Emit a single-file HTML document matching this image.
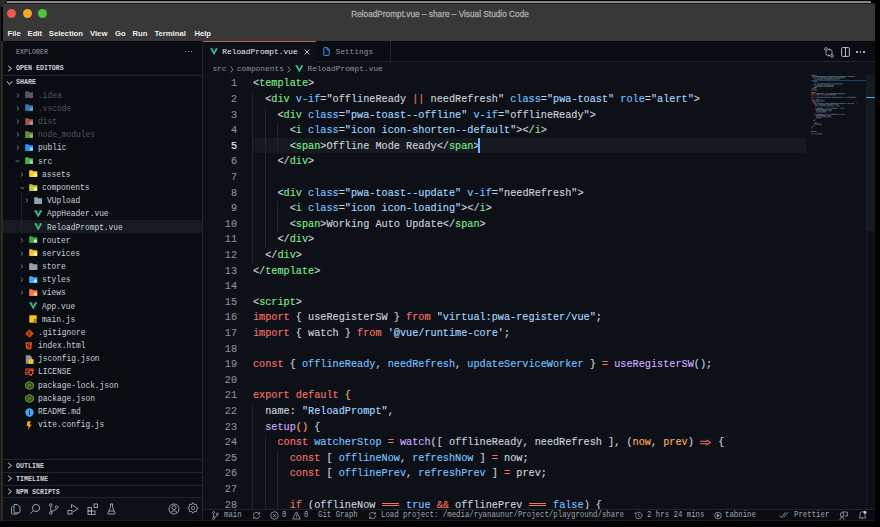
<!DOCTYPE html>
<html><head><meta charset="utf-8">
<style>
*{margin:0;padding:0;box-sizing:border-box}
html,body{width:880px;height:527px;overflow:hidden;background:#000}
body{position:relative;font-family:"Liberation Mono",monospace}
div,svg{position:absolute}
.mono{font-family:"Liberation Mono",monospace}
.sans{font-family:"Liberation Sans",sans-serif}
#topline{left:7px;top:1px;width:864px;height:2px;background:#858585}
#corner{left:0;top:0;width:7px;height:7px;background:#2a2a2a}
#leftcol{left:0;top:7px;width:1px;height:515px;background:#1c1c1c}
#leftcol2{left:1px;top:41px;width:2px;height:480px;background:#2e2a22}
#titlebar{left:3px;top:3px;width:872px;height:38px;background:#383838;border-top:1px solid #1e1e1e}
.tl-dot{width:9px;height:9px;border-radius:50%}
#title{left:0;top:9.8px;width:880px;text-align:center;font-family:"Liberation Sans",sans-serif;font-size:8.27px;font-weight:normal;-webkit-text-stroke:0.3px currentColor;color:#a9a9a9;white-space:nowrap}
.menu{top:28.8px;font-family:"Liberation Sans",sans-serif;font-weight:bold;font-size:7.7px;color:#ececec;white-space:nowrap}
#sidebar{left:3px;top:41px;width:199px;height:480px;background:#090c11}
#sbborder{left:202px;top:41px;width:1px;height:480px;background:#22262c}
#editor{left:203px;top:41px;width:672px;height:468px;background:#0d1117}
#tabbar{left:203px;top:41px;width:672px;height:20px;background:#090c10}
#tabline{left:316px;top:60.5px;width:559px;height:1px;background:#22262c}
#tab1{left:203px;top:41px;width:113px;height:20px;background:#0d1117;border-top:1px solid #c2624c}
#tab2{left:316px;top:41px;width:75px;height:20px;background:#090c10;border-right:1px solid #22262c}
.tabtxt{font-size:7.85px;white-space:nowrap;line-height:10px}
.ig{width:1px;background:#21262d}
.cl{-webkit-text-stroke:0.15px currentColor;left:252.8px;height:15.60px;line-height:15.60px;font-size:11px;transform:scaleX(0.9273);transform-origin:0 0;white-space:pre;color:#c9d1d9}
.ln{-webkit-text-stroke:0.15px currentColor;left:203px;width:34px;height:15.60px;line-height:15.60px;font-size:10.2px;text-align:right;color:#858e98}
.ln.act{color:#e6edf3}
.p{color:#c9d1d9}.t{color:#7ee787}.a{color:#79c0ff}.s{color:#a5d6ff}.k{color:#f47067}.f{color:#d2a8ff}.v{color:#79c0ff}.o{color:#ffa657}
#curline{left:252.8px;top:137.5px;width:553.6px;height:15.9px;background:#151a21}
#cursor{left:478.4px;top:137.8px;width:1.6px;height:15.2px;background:#6cb6ff}
.tl{font-size:8.5px;transform:scaleX(0.929);transform-origin:0 0;line-height:13px;white-space:pre;color:#c9d1d9}
.tl.dim{color:#4f575f}
.sel{left:3px;width:199px;height:12.8px;background:#161b22}
.hdr{font-size:6.65px;line-height:10px;white-space:pre;color:#c9d1d9;font-weight:bold}
.sect{left:3px;width:199px;height:1px;background:#21262d}
#status{left:203px;top:509px;width:672px;height:12px;background:#0a0c10;border-top:1px solid #22262c}
.st{top:509.6px;font-size:8.4px;transform:scaleX(0.879);transform-origin:0 0;line-height:11px;white-space:pre;color:#9da5ad}
#actbar{left:3px;top:497px;width:199px;height:23px;background:#0c0f14;border-top:1px solid #21262d}
#scrollbar{left:866px;top:75px;width:8.5px;height:434px;background:#0d1117;border-left:1px solid #161b22}
#slider{left:866px;top:75px;width:8.5px;height:156px;background:#151a21}
.mm{left:0;top:0}
</style></head>
<body>
<div id="corner"></div>
<div id="leftcol"></div>
<div id="leftcol2"></div>
<div id="topline"></div>
<div id="titlebar"></div>
<div class="tl-dot" style="left:7px;top:8.8px;background:#ec5b53"></div>
<div class="tl-dot" style="left:22.6px;top:8.8px;background:#eeaa22"></div>
<div class="tl-dot" style="left:38.2px;top:8.8px;background:#50c53c"></div>
<div id="title">ReloadPrompt.vue – share – Visual Studio Code</div>
<div class="menu" style="left:7.5px">File</div>
<div class="menu" style="left:27.5px">Edit</div>
<div class="menu" style="left:48.8px">Selection</div>
<div class="menu" style="left:90px">View</div>
<div class="menu" style="left:115px">Go</div>
<div class="menu" style="left:132.5px">Run</div>
<div class="menu" style="left:154.4px">Terminal</div>
<div class="menu" style="left:194.4px">Help</div>

<div id="sidebar"></div>
<div class="hdr" style="left:16px;top:46.5px;font-weight:normal;color:#9aa2aa">EXPLORER</div>
<div style="left:184.6px;top:51px;width:1.3px;height:1.3px;background:#8b949e"></div><div style="left:187.9px;top:51px;width:1.3px;height:1.3px;background:#8b949e"></div><div style="left:191.2px;top:51px;width:1.3px;height:1.3px;background:#8b949e"></div>
<svg style="left:7px;top:65px" width="6" height="7" viewBox="0 0 6 7"><path d="M1.2 0.8 L4.4 3.5 L1.2 6.2" fill="none" stroke="#c9d1d9" stroke-width="1"/></svg>
<div class="hdr" style="left:16px;top:63px">OPEN EDITORS</div>
<div class="sect" style="top:75px"></div>
<svg style="left:6px;top:80px" width="7" height="6" viewBox="0 0 7 6"><path d="M0.8 1.2 L3.5 4.4 L6.2 1.2" fill="none" stroke="#c9d1d9" stroke-width="1"/></svg>
<div class="hdr" style="left:16px;top:77px">SHARE</div>
<svg class="chev" style="left:15.80px;top:92.70px" width="4" height="5" viewBox="0 0 4 5"><path d="M0.8 0.5 L3 2.5 L0.8 4.5" fill="none" stroke="#8b949e" stroke-width="0.8"/></svg>
<div class="ti" style="left:24.70px;top:91.30px;opacity:0.7"><svg width="8.6" height="7.2" viewBox="0 0 9 7.5"><path d="M0.2 0.8 Q0.2 0.2 0.8 0.2 H3.4 L4.3 1.2 H8.2 Q8.8 1.2 8.8 1.8 V6.9 Q8.8 7.4 8.2 7.4 H0.8 Q0.2 7.4 0.2 6.9Z" fill="#607d8b"/><circle cx="6.7" cy="5.3" r="1.9" fill="#e8497a"/></svg></div>
<div class="tl dim" style="left:37.50px;top:89.70px">.idea</div>
<svg class="chev" style="left:15.80px;top:105.88px" width="4" height="5" viewBox="0 0 4 5"><path d="M0.8 0.5 L3 2.5 L0.8 4.5" fill="none" stroke="#8b949e" stroke-width="0.8"/></svg>
<div class="ti" style="left:24.70px;top:104.48px;opacity:0.7"><svg width="8.6" height="7.2" viewBox="0 0 9 7.5"><path d="M0.2 0.8 Q0.2 0.2 0.8 0.2 H3.4 L4.3 1.2 H8.2 Q8.8 1.2 8.8 1.8 V6.9 Q8.8 7.4 8.2 7.4 H0.8 Q0.2 7.4 0.2 6.9Z" fill="#42a5f5"/><circle cx="6.7" cy="5.3" r="1.9" fill="#9fd4ff"/></svg></div>
<div class="tl dim" style="left:37.50px;top:102.88px">.vscode</div>
<svg class="chev" style="left:15.80px;top:119.06px" width="4" height="5" viewBox="0 0 4 5"><path d="M0.8 0.5 L3 2.5 L0.8 4.5" fill="none" stroke="#8b949e" stroke-width="0.8"/></svg>
<div class="ti" style="left:24.70px;top:117.66px;opacity:0.7"><svg width="8.6" height="7.2" viewBox="0 0 9 7.5"><path d="M0.2 0.8 Q0.2 0.2 0.8 0.2 H3.4 L4.3 1.2 H8.2 Q8.8 1.2 8.8 1.8 V6.9 Q8.8 7.4 8.2 7.4 H0.8 Q0.2 7.4 0.2 6.9Z" fill="#e57373"/><circle cx="6.7" cy="5.3" r="1.9" fill="#ffcdd2"/></svg></div>
<div class="tl dim" style="left:37.50px;top:116.06px">dist</div>
<svg class="chev" style="left:15.80px;top:132.24px" width="4" height="5" viewBox="0 0 4 5"><path d="M0.8 0.5 L3 2.5 L0.8 4.5" fill="none" stroke="#8b949e" stroke-width="0.8"/></svg>
<div class="ti" style="left:24.70px;top:130.84px;opacity:0.7"><svg width="8.6" height="7.2" viewBox="0 0 9 7.5"><path d="M0.2 0.8 Q0.2 0.2 0.8 0.2 H3.4 L4.3 1.2 H8.2 Q8.8 1.2 8.8 1.8 V6.9 Q8.8 7.4 8.2 7.4 H0.8 Q0.2 7.4 0.2 6.9Z" fill="#8bc34a"/><circle cx="6.7" cy="5.3" r="1.9" fill="#dcedc8"/></svg></div>
<div class="tl dim" style="left:37.50px;top:129.24px">node_modules</div>
<svg class="chev" style="left:15.80px;top:145.42px" width="4" height="5" viewBox="0 0 4 5"><path d="M0.8 0.5 L3 2.5 L0.8 4.5" fill="none" stroke="#8b949e" stroke-width="0.8"/></svg>
<div class="ti" style="left:24.70px;top:144.02px;opacity:1"><svg width="8.6" height="7.2" viewBox="0 0 9 7.5"><path d="M0.2 0.8 Q0.2 0.2 0.8 0.2 H3.4 L4.3 1.2 H8.2 Q8.8 1.2 8.8 1.8 V6.9 Q8.8 7.4 8.2 7.4 H0.8 Q0.2 7.4 0.2 6.9Z" fill="#2196f3"/><circle cx="6.7" cy="5.3" r="1.9" fill="#90caf9"/></svg></div>
<div class="tl" style="left:37.50px;top:142.42px">public</div>
<svg class="chev" style="left:15.30px;top:159.30px" width="5" height="4" viewBox="0 0 5 4"><path d="M0.5 0.8 L2.5 3 L4.5 0.8" fill="none" stroke="#8b949e" stroke-width="0.8"/></svg>
<div class="ti" style="left:24.70px;top:157.20px;opacity:1"><svg width="8.6" height="7.2" viewBox="0 0 9 7.5"><path d="M0.2 0.8 Q0.2 0.2 0.8 0.2 H3.4 L4.3 1.2 H8.2 Q8.8 1.2 8.8 1.8 V6.9 Q8.8 7.4 8.2 7.4 H0.8 Q0.2 7.4 0.2 6.9Z" fill="#4caf50"/><circle cx="6.7" cy="5.3" r="1.9" fill="#a5d6a7"/></svg></div>
<div class="tl" style="left:37.50px;top:155.60px">src</div>
<svg class="chev" style="left:20.40px;top:171.78px" width="4" height="5" viewBox="0 0 4 5"><path d="M0.8 0.5 L3 2.5 L0.8 4.5" fill="none" stroke="#8b949e" stroke-width="0.8"/></svg>
<div class="ti" style="left:29.30px;top:170.38px;opacity:1"><svg width="8.6" height="7.2" viewBox="0 0 9 7.5"><path d="M0.2 0.8 Q0.2 0.2 0.8 0.2 H3.4 L4.3 1.2 H8.2 Q8.8 1.2 8.8 1.8 V6.9 Q8.8 7.4 8.2 7.4 H0.8 Q0.2 7.4 0.2 6.9Z" fill="#ffca28"/><circle cx="6.7" cy="5.3" r="1.9" fill="#fff59d"/></svg></div>
<div class="tl" style="left:42.10px;top:168.78px">assets</div>
<svg class="chev" style="left:19.90px;top:185.66px" width="5" height="4" viewBox="0 0 5 4"><path d="M0.5 0.8 L2.5 3 L4.5 0.8" fill="none" stroke="#8b949e" stroke-width="0.8"/></svg>
<div class="ti" style="left:29.30px;top:183.56px;opacity:1"><svg width="8.6" height="7.2" viewBox="0 0 9 7.5"><path d="M0.2 0.8 Q0.2 0.2 0.8 0.2 H3.4 L4.3 1.2 H8.2 Q8.8 1.2 8.8 1.8 V6.9 Q8.8 7.4 8.2 7.4 H0.8 Q0.2 7.4 0.2 6.9Z" fill="#c0ca33"/><circle cx="6.7" cy="5.3" r="1.9" fill="#f0f4c3"/></svg></div>
<div class="tl" style="left:42.10px;top:181.96px">components</div>
<svg class="chev" style="left:25.00px;top:198.14px" width="4" height="5" viewBox="0 0 4 5"><path d="M0.8 0.5 L3 2.5 L0.8 4.5" fill="none" stroke="#8b949e" stroke-width="0.8"/></svg>
<div class="ti" style="left:33.90px;top:196.74px;opacity:1"><svg width="8.6" height="7.2" viewBox="0 0 9 7.5"><path d="M0.2 0.8 Q0.2 0.2 0.8 0.2 H3.4 L4.3 1.2 H8.2 Q8.8 1.2 8.8 1.8 V6.9 Q8.8 7.4 8.2 7.4 H0.8 Q0.2 7.4 0.2 6.9Z" fill="#90a4ae"/></svg></div>
<div class="tl" style="left:46.70px;top:195.14px">VUpload</div>
<div class="ti" style="left:33.90px;top:209.92px;opacity:1"><svg width="8.5" height="7.5" viewBox="0 0 9 8"><path d="M0 0.2 H2.5 L4.5 4.3 L6.5 0.2 H9 L4.5 8Z" fill="#41b883"/><path d="M2.5 0.2 H3.4 L4.5 2.2 L5.6 0.2 H6.5 L4.5 4.3Z" fill="#34495e"/></svg></div>
<div class="tl" style="left:46.70px;top:208.32px">AppHeader.vue</div>
<div class="sel" style="top:220.30px"></div>
<div class="ti" style="left:33.90px;top:223.10px;opacity:1"><svg width="8.5" height="7.5" viewBox="0 0 9 8"><path d="M0 0.2 H2.5 L4.5 4.3 L6.5 0.2 H9 L4.5 8Z" fill="#41b883"/><path d="M2.5 0.2 H3.4 L4.5 2.2 L5.6 0.2 H6.5 L4.5 4.3Z" fill="#34495e"/></svg></div>
<div class="tl" style="left:46.70px;top:221.50px">ReloadPrompt.vue</div>
<svg class="chev" style="left:20.40px;top:237.68px" width="4" height="5" viewBox="0 0 4 5"><path d="M0.8 0.5 L3 2.5 L0.8 4.5" fill="none" stroke="#8b949e" stroke-width="0.8"/></svg>
<div class="ti" style="left:29.30px;top:236.28px;opacity:1"><svg width="8.6" height="7.2" viewBox="0 0 9 7.5"><path d="M0.2 0.8 Q0.2 0.2 0.8 0.2 H3.4 L4.3 1.2 H8.2 Q8.8 1.2 8.8 1.8 V6.9 Q8.8 7.4 8.2 7.4 H0.8 Q0.2 7.4 0.2 6.9Z" fill="#43a047"/><circle cx="6.7" cy="5.3" r="1.9" fill="#c8e6c9"/></svg></div>
<div class="tl" style="left:42.10px;top:234.68px">router</div>
<svg class="chev" style="left:20.40px;top:250.86px" width="4" height="5" viewBox="0 0 4 5"><path d="M0.8 0.5 L3 2.5 L0.8 4.5" fill="none" stroke="#8b949e" stroke-width="0.8"/></svg>
<div class="ti" style="left:29.30px;top:249.46px;opacity:1"><svg width="8.6" height="7.2" viewBox="0 0 9 7.5"><path d="M0.2 0.8 Q0.2 0.2 0.8 0.2 H3.4 L4.3 1.2 H8.2 Q8.8 1.2 8.8 1.8 V6.9 Q8.8 7.4 8.2 7.4 H0.8 Q0.2 7.4 0.2 6.9Z" fill="#fbc02d"/><circle cx="6.7" cy="5.3" r="1.9" fill="#fff9c4"/></svg></div>
<div class="tl" style="left:42.10px;top:247.86px">services</div>
<svg class="chev" style="left:20.40px;top:264.04px" width="4" height="5" viewBox="0 0 4 5"><path d="M0.8 0.5 L3 2.5 L0.8 4.5" fill="none" stroke="#8b949e" stroke-width="0.8"/></svg>
<div class="ti" style="left:29.30px;top:262.64px;opacity:1"><svg width="8.6" height="7.2" viewBox="0 0 9 7.5"><path d="M0.2 0.8 Q0.2 0.2 0.8 0.2 H3.4 L4.3 1.2 H8.2 Q8.8 1.2 8.8 1.8 V6.9 Q8.8 7.4 8.2 7.4 H0.8 Q0.2 7.4 0.2 6.9Z" fill="#90a4ae"/></svg></div>
<div class="tl" style="left:42.10px;top:261.04px">store</div>
<svg class="chev" style="left:20.40px;top:277.22px" width="4" height="5" viewBox="0 0 4 5"><path d="M0.8 0.5 L3 2.5 L0.8 4.5" fill="none" stroke="#8b949e" stroke-width="0.8"/></svg>
<div class="ti" style="left:29.30px;top:275.82px;opacity:1"><svg width="8.6" height="7.2" viewBox="0 0 9 7.5"><path d="M0.2 0.8 Q0.2 0.2 0.8 0.2 H3.4 L4.3 1.2 H8.2 Q8.8 1.2 8.8 1.8 V6.9 Q8.8 7.4 8.2 7.4 H0.8 Q0.2 7.4 0.2 6.9Z" fill="#42a5f5"/><circle cx="6.7" cy="5.3" r="1.9" fill="#bbdefb"/></svg></div>
<div class="tl" style="left:42.10px;top:274.22px">styles</div>
<svg class="chev" style="left:20.40px;top:290.40px" width="4" height="5" viewBox="0 0 4 5"><path d="M0.8 0.5 L3 2.5 L0.8 4.5" fill="none" stroke="#8b949e" stroke-width="0.8"/></svg>
<div class="ti" style="left:29.30px;top:289.00px;opacity:1"><svg width="8.6" height="7.2" viewBox="0 0 9 7.5"><path d="M0.2 0.8 Q0.2 0.2 0.8 0.2 H3.4 L4.3 1.2 H8.2 Q8.8 1.2 8.8 1.8 V6.9 Q8.8 7.4 8.2 7.4 H0.8 Q0.2 7.4 0.2 6.9Z" fill="#ff7043"/><circle cx="6.7" cy="5.3" r="1.9" fill="#ffccbc"/></svg></div>
<div class="tl" style="left:42.10px;top:287.40px">views</div>
<div class="ti" style="left:29.30px;top:302.18px;opacity:1"><svg width="8.5" height="7.5" viewBox="0 0 9 8"><path d="M0 0.2 H2.5 L4.5 4.3 L6.5 0.2 H9 L4.5 8Z" fill="#41b883"/><path d="M2.5 0.2 H3.4 L4.5 2.2 L5.6 0.2 H6.5 L4.5 4.3Z" fill="#34495e"/></svg></div>
<div class="tl" style="left:42.10px;top:300.58px">App.vue</div>
<div class="ti" style="left:29.30px;top:315.36px;opacity:1"><svg width="8" height="8" viewBox="0 0 8 8"><rect x="0.3" y="0.3" width="7.4" height="7.4" fill="#f5c518"/><text x="4.3" y="7" font-size="3.6" font-family="Liberation Sans" font-weight="bold" fill="#333">JS</text></svg></div>
<div class="tl" style="left:42.10px;top:313.76px">main.js</div>
<div class="ti" style="left:24.70px;top:328.54px;opacity:1"><svg width="9" height="9" viewBox="0 0 9 9"><path d="M4.5 0.3 L8.7 4.5 L4.5 8.7 L0.3 4.5Z" fill="#e64a19"/><path d="M4 2.4 V6.6 M4 3.6 L5.6 5" stroke="#0a0c10" stroke-width="0.8"/></svg></div>
<div class="tl" style="left:37.50px;top:326.94px">.gitignore</div>
<div class="ti" style="left:24.70px;top:341.72px;opacity:1"><svg width="7.5" height="8" viewBox="0 0 8 9"><path d="M0.3 0.3 H7.7 L7 7.6 L4 8.7 L1 7.6Z" fill="#e44d26"/><path d="M5.6 2.2 H2.6 L2.8 4.3 H5.2 L5 6.3 L4 6.7 L3 6.3" fill="none" stroke="#1a0d08" stroke-width="0.9"/></svg></div>
<div class="tl" style="left:37.50px;top:340.12px">index.html</div>
<div class="ti" style="left:24.70px;top:354.90px;opacity:1"><svg width="9" height="9" viewBox="0 0 9 9"><path d="M0.8 0.3 H5 L7 2.3 V8.7 H0.8Z" fill="#8d9399"/><rect x="3.6" y="4.2" width="5" height="4.6" fill="#f5c518"/></svg></div>
<div class="tl" style="left:37.50px;top:353.30px">jsconfig.json</div>
<div class="ti" style="left:24.70px;top:368.08px;opacity:1"><svg width="9" height="8.5" viewBox="0 0 9 9"><path d="M3.2 6.6 H1 Q0.6 6.6 0.6 6.2 V1.4 Q0.6 1 1 1 H8 Q8.4 1 8.4 1.4 V3.2" fill="none" stroke="#ff5722" stroke-width="1.1"/><path d="M2 3 H3.5 M2 4.6 H3" stroke="#ff5722" stroke-width="0.9"/><circle cx="5.9" cy="4.6" r="2.3" fill="none" stroke="#ff5722" stroke-width="1.2"/><path d="M4.8 6.6 L4.6 8.8 L5.9 8 L7.2 8.8 L7 6.6Z" fill="#ff5722"/></svg></div>
<div class="tl" style="left:37.50px;top:366.48px">LICENSE</div>
<div class="ti" style="left:24.70px;top:381.26px;opacity:1"><svg width="9" height="9" viewBox="0 0 9 9"><path d="M4.5 0.4 L8.3 2.5 V6.5 L4.5 8.6 L0.7 6.5 V2.5Z" fill="#2e4a1e" stroke="#7cb342" stroke-width="0.9"/><path d="M3.6 3 V5.8 Q3.6 6.4 3 6.2 M5.6 3.2 Q4.8 2.8 4.7 3.6 Q4.8 4.4 5.5 4.6 Q5.9 5.4 4.9 5.6" fill="none" stroke="#8bc34a" stroke-width="0.6"/></svg></div>
<div class="tl" style="left:37.50px;top:379.66px">package-lock.json</div>
<div class="ti" style="left:24.70px;top:394.44px;opacity:1"><svg width="9" height="9" viewBox="0 0 9 9"><path d="M4.5 0.4 L8.3 2.5 V6.5 L4.5 8.6 L0.7 6.5 V2.5Z" fill="#2e4a1e" stroke="#7cb342" stroke-width="0.9"/><path d="M3.6 3 V5.8 Q3.6 6.4 3 6.2 M5.6 3.2 Q4.8 2.8 4.7 3.6 Q4.8 4.4 5.5 4.6 Q5.9 5.4 4.9 5.6" fill="none" stroke="#8bc34a" stroke-width="0.6"/></svg></div>
<div class="tl" style="left:37.50px;top:392.84px">package.json</div>
<div class="ti" style="left:24.70px;top:407.62px;opacity:1"><svg width="9" height="9" viewBox="0 0 9 9"><circle cx="4.5" cy="4.5" r="4.2" fill="#42a5f5"/><rect x="4" y="3.6" width="1" height="3.4" fill="#0a0c10"/><rect x="4" y="2" width="1" height="1" fill="#0a0c10"/></svg></div>
<div class="tl" style="left:37.50px;top:406.02px">README.md</div>
<div class="ti" style="left:24.70px;top:420.80px;opacity:1"><svg width="8" height="9" viewBox="0 0 8 9"><path d="M2.6 0.3 H5.8 L4.6 3.4 H6.6 L2.8 8.8 L3.6 4.9 H1.6Z" fill="#ffab00"/></svg></div>
<div class="tl" style="left:37.50px;top:419.20px">vite.config.js</div>
<div class="ig" style="left:21.2px;top:193px;height:40px;background:#21262d"></div>
<div class="sect" style="top:458.5px"></div>
<svg style="left:7px;top:461.5px" width="6" height="7" viewBox="0 0 6 7"><path d="M1.2 0.8 L4.4 3.5 L1.2 6.2" fill="none" stroke="#c9d1d9" stroke-width="1"/></svg>
<div class="hdr" style="left:16px;top:460.7px">OUTLINE</div>
<div class="sect" style="top:471.5px"></div>
<svg style="left:7px;top:474.7px" width="6" height="7" viewBox="0 0 6 7"><path d="M1.2 0.8 L4.4 3.5 L1.2 6.2" fill="none" stroke="#c9d1d9" stroke-width="1"/></svg>
<div class="hdr" style="left:16px;top:474.1px">TIMELINE</div>
<div class="sect" style="top:484.5px"></div>
<svg style="left:7px;top:487.8px" width="6" height="7" viewBox="0 0 6 7"><path d="M1.2 0.8 L4.4 3.5 L1.2 6.2" fill="none" stroke="#c9d1d9" stroke-width="1"/></svg>
<div class="hdr" style="left:16px;top:487.3px">NPM SCRIPTS</div>
<div id="actbar"></div>
<!-- activity icons -->
<svg style="left:10px;top:503px" width="12" height="12" viewBox="0 0 12 12" fill="none" stroke="#a3aab3" stroke-width="0.9"><path d="M4 1.5 H7.5 L10 4 V9 Q10 9.8 9.2 9.8 H4.8 Q4 9.8 4 9 Z"/><path d="M2.6 3.5 Q1.5 3.5 1.5 4.6 V10.2 Q1.5 11 2.3 11 H7 Q7.8 11 7.8 10.2"/></svg>
<svg style="left:29px;top:503px" width="12" height="12" viewBox="0 0 12 12" fill="none" stroke="#a3aab3" stroke-width="0.9"><circle cx="7" cy="5" r="3.6"/><path d="M4.4 7.6 L1.2 10.8"/></svg>
<svg style="left:48px;top:503px" width="11" height="12" viewBox="0 0 11 12" fill="none" stroke="#a3aab3" stroke-width="0.9"><circle cx="2.8" cy="2" r="1.3"/><circle cx="2.8" cy="10" r="1.3"/><circle cx="8.6" cy="4.2" r="1.3"/><path d="M2.8 3.3 V8.7 M8.6 5.5 Q8.6 7.2 2.8 8.6"/></svg>
<svg style="left:67px;top:503px" width="12" height="12" viewBox="0 0 12 12" fill="none" stroke="#a3aab3" stroke-width="0.9"><path d="M4.5 1.5 L11 5.8 L6 9"/><path d="M4.5 1.5 V5"/><rect x="1" y="7.4" width="4" height="3.6"/></svg>
<svg style="left:86.5px;top:502.5px" width="12" height="12" viewBox="0 0 12 12" fill="none" stroke="#a3aab3" stroke-width="0.9"><rect x="1" y="4.5" width="3.5" height="3.5"/><rect x="1" y="8" width="3.5" height="3.5"/><rect x="4.5" y="8" width="3.5" height="3.5"/><rect x="7" y="1" width="3.5" height="3.5"/></svg>
<svg style="left:106.5px;top:503px" width="9" height="12" viewBox="0 0 9 12" fill="none" stroke="#a3aab3" stroke-width="0.9"><path d="M3 1 H6 M3.5 1 V4.5 L0.8 10.2 Q0.6 11 1.4 11 H7.6 Q8.4 11 8.2 10.2 L5.5 4.5 V1"/><path d="M2 8 H7"/></svg>
<svg style="left:167.5px;top:502.5px" width="12" height="12" viewBox="0 0 12 12" fill="none" stroke="#a3aab3" stroke-width="0.9"><circle cx="6" cy="6" r="5"/><circle cx="6" cy="4.6" r="2"/><path d="M2.6 9.6 Q6 6 9.4 9.6"/></svg>
<svg style="left:187px;top:502.3px" width="12" height="12" viewBox="0 0 12 12" fill="none" stroke="#a3aab3" stroke-width="0.8"><path d="M9.81 5.16 L10.96 5.35 L10.96 6.65 L9.81 6.84 L9.28 8.10 L9.96 9.05 L9.05 9.96 L8.10 9.28 L6.84 9.81 L6.65 10.96 L5.35 10.96 L5.16 9.81 L3.90 9.28 L2.95 9.96 L2.04 9.05 L2.72 8.10 L2.19 6.84 L1.04 6.65 L1.04 5.35 L2.19 5.16 L2.72 3.90 L2.04 2.95 L2.95 2.04 L3.90 2.72 L5.16 2.19 L5.35 1.04 L6.65 1.04 L6.84 2.19 L8.10 2.72 L9.05 2.04 L9.96 2.95 L9.28 3.90Z"/><circle cx="6" cy="6" r="1.6"/></svg>

<div id="editor"></div>
<div id="tabbar"></div>
<div id="tabline"></div>
<div id="tab1"></div>
<svg style="left:209.5px;top:48px" width="8" height="7.2" viewBox="0 0 9 8"><path d="M0 0.2 H2.5 L4.5 4.3 L6.5 0.2 H9 L4.5 8Z" fill="#41b883"/></svg>
<div class="tabtxt" style="left:222.3px;top:46.5px;color:#e6edf3">ReloadPrompt.vue</div>
<svg style="left:304px;top:48.6px" width="6" height="6" viewBox="0 0 6 6"><path d="M0.6 0.6 L5.4 5.4 M5.4 0.6 L0.6 5.4" stroke="#c9d1d9" stroke-width="0.9"/></svg>
<div id="tab2"></div>
<svg style="left:323px;top:46.5px" width="7" height="9" viewBox="0 0 7 9"><path d="M0.8 1.2 Q0.8 0.6 1.4 0.6 H4.2 L6.2 2.6 V7.8 Q6.2 8.4 5.6 8.4 H1.4 Q0.8 8.4 0.8 7.8Z M4 0.6 V2.8 H6.2" fill="none" stroke="#4493f8" stroke-width="1"/></svg>
<div class="tabtxt" style="left:335.5px;top:46.5px;color:#8b949e">Settings</div>
<!-- editor actions -->
<svg style="left:824px;top:46.5px" width="10" height="11" viewBox="0 0 10 11" fill="none" stroke="#c9d1d9" stroke-width="0.7"><circle cx="2" cy="2" r="1.4"/><circle cx="8" cy="9" r="1.4"/><path d="M2 3.2 V6.5 Q2 8.5 4 8.5 H5.5 M4.5 7.5 L5.6 8.5 L4.5 9.5"/><path d="M8 7.8 V4.5 Q8 2.5 6 2.5 H4.5 M5.5 1.5 L4.4 2.5 L5.5 3.5"/></svg>
<svg style="left:840.5px;top:46.5px" width="9" height="10" viewBox="0 0 9 10" fill="none" stroke="#c9d1d9" stroke-width="0.9"><rect x="0.6" y="0.6" width="7.8" height="8.8" rx="1"/><path d="M4.5 0.6 V9.4"/></svg>
<div style="left:856px;top:51px;width:1.5px;height:1.5px;background:#c9d1d9;border-radius:50%"></div>
<div style="left:859.5px;top:51px;width:1.5px;height:1.5px;background:#c9d1d9;border-radius:50%"></div>
<div style="left:863px;top:51px;width:1.5px;height:1.5px;background:#c9d1d9;border-radius:50%"></div>

<!-- breadcrumbs -->
<div class="tabtxt" style="left:212.4px;top:63.7px;color:#8b949e">src</div>
<svg style="left:229.5px;top:65.5px" width="4" height="7" viewBox="0 0 4 7"><path d="M0.6 0.5 L3.2 3.5 L0.6 6.5" fill="none" stroke="#8b949e" stroke-width="0.9"/></svg>
<div class="tabtxt" style="left:236.8px;top:63.7px;color:#8b949e">components</div>
<svg style="left:287px;top:65.5px" width="4" height="7" viewBox="0 0 4 7"><path d="M0.6 0.5 L3.2 3.5 L0.6 6.5" fill="none" stroke="#8b949e" stroke-width="0.9"/></svg>
<svg style="left:294.6px;top:65px" width="8.7" height="7.5" viewBox="0 0 9 8"><path d="M0 0.2 H2.5 L4.5 4.3 L6.5 0.2 H9 L4.5 8Z" fill="#41b883"/></svg>
<div class="tabtxt" style="left:307.5px;top:63.7px;color:#8b949e">ReloadPrompt.vue</div>

<div id="curline"></div>
<div class="ig" style="left:252.30px;top:92.00px;height:15.60px"></div>
<div class="ig" style="left:252.30px;top:107.60px;height:15.60px"></div>
<div class="ig" style="left:264.54px;top:107.60px;height:15.60px"></div>
<div class="ig" style="left:252.30px;top:123.20px;height:15.60px"></div>
<div class="ig" style="left:264.54px;top:123.20px;height:15.60px"></div>
<div class="ig" style="left:276.78px;top:123.20px;height:15.60px"></div>
<div class="ig" style="left:252.30px;top:138.80px;height:15.60px"></div>
<div class="ig" style="left:264.54px;top:138.80px;height:15.60px"></div>
<div class="ig" style="left:276.78px;top:138.80px;height:15.60px"></div>
<div class="ig" style="left:252.30px;top:154.40px;height:15.60px"></div>
<div class="ig" style="left:264.54px;top:154.40px;height:15.60px"></div>
<div class="ig" style="left:252.30px;top:170.00px;height:15.60px"></div>
<div class="ig" style="left:264.54px;top:170.00px;height:15.60px"></div>
<div class="ig" style="left:252.30px;top:185.60px;height:15.60px"></div>
<div class="ig" style="left:264.54px;top:185.60px;height:15.60px"></div>
<div class="ig" style="left:252.30px;top:201.20px;height:15.60px"></div>
<div class="ig" style="left:264.54px;top:201.20px;height:15.60px"></div>
<div class="ig" style="left:276.78px;top:201.20px;height:15.60px"></div>
<div class="ig" style="left:252.30px;top:216.80px;height:15.60px"></div>
<div class="ig" style="left:264.54px;top:216.80px;height:15.60px"></div>
<div class="ig" style="left:276.78px;top:216.80px;height:15.60px"></div>
<div class="ig" style="left:252.30px;top:232.40px;height:15.60px"></div>
<div class="ig" style="left:264.54px;top:232.40px;height:15.60px"></div>
<div class="ig" style="left:252.30px;top:248.00px;height:15.60px"></div>
<div class="ig" style="left:252.30px;top:404.00px;height:15.60px"></div>
<div class="ig" style="left:252.30px;top:419.60px;height:15.60px"></div>
<div class="ig" style="left:252.30px;top:435.20px;height:15.60px"></div>
<div class="ig" style="left:264.54px;top:435.20px;height:15.60px"></div>
<div class="ig" style="left:252.30px;top:450.80px;height:15.60px"></div>
<div class="ig" style="left:264.54px;top:450.80px;height:15.60px"></div>
<div class="ig" style="left:276.78px;top:450.80px;height:15.60px"></div>
<div class="ig" style="left:252.30px;top:466.40px;height:15.60px"></div>
<div class="ig" style="left:264.54px;top:466.40px;height:15.60px"></div>
<div class="ig" style="left:276.78px;top:466.40px;height:15.60px"></div>
<div class="ig" style="left:252.30px;top:482.00px;height:15.60px"></div>
<div class="ig" style="left:264.54px;top:482.00px;height:15.60px"></div>
<div class="ig" style="left:276.78px;top:482.00px;height:15.60px"></div>
<div class="ig" style="left:252.30px;top:497.60px;height:15.60px"></div>
<div class="ig" style="left:264.54px;top:497.60px;height:15.60px"></div>
<div class="ig" style="left:276.78px;top:497.60px;height:15.60px"></div>
<div class="cl" style="top:76.40px"><span class="p">&lt;</span><span class="t">template</span><span class="p">&gt;</span></div>
<div class="ln" style="top:76.40px">1</div>
<div class="cl" style="top:92.00px"><span class="p">  &lt;</span><span class="t">div</span><span class="p"> </span><span class="a">v-if</span><span class="p">=&quot;offlineReady </span><span class="k">||</span><span class="p"> needRefresh&quot;</span><span class="p"> </span><span class="a">class</span><span class="p">=</span><span class="s">&quot;pwa-toast&quot;</span><span class="p"> </span><span class="a">role</span><span class="p">=</span><span class="s">&quot;alert&quot;</span><span class="p">&gt;</span></div>
<div class="ln" style="top:92.00px">2</div>
<div class="cl" style="top:107.60px"><span class="p">    &lt;</span><span class="t">div</span><span class="p"> </span><span class="a">class</span><span class="p">=</span><span class="s">&quot;pwa-toast--offline&quot;</span><span class="p"> </span><span class="a">v-if</span><span class="p">=&quot;offlineReady&quot;&gt;</span></div>
<div class="ln" style="top:107.60px">3</div>
<div class="cl" style="top:123.20px"><span class="p">      &lt;</span><span class="t">i</span><span class="p"> </span><span class="a">class</span><span class="p">=</span><span class="s">&quot;icon icon-shorten--default&quot;</span><span class="p">&gt;&lt;/</span><span class="t">i</span><span class="p">&gt;</span></div>
<div class="ln" style="top:123.20px">4</div>
<div class="cl" style="top:138.80px"><span class="p">      &lt;</span><span class="t">span</span><span class="p">&gt;Offline Mode Ready&lt;/</span><span class="t">span</span><span class="p">&gt;</span></div>
<div class="ln act" style="top:138.80px">5</div>
<div class="cl" style="top:154.40px"><span class="p">    &lt;/</span><span class="t">div</span><span class="p">&gt;</span></div>
<div class="ln" style="top:154.40px">6</div>
<div class="cl" style="top:170.00px"></div>
<div class="ln" style="top:170.00px">7</div>
<div class="cl" style="top:185.60px"><span class="p">    &lt;</span><span class="t">div</span><span class="p"> </span><span class="a">class</span><span class="p">=</span><span class="s">&quot;pwa-toast--update&quot;</span><span class="p"> </span><span class="a">v-if</span><span class="p">=&quot;needRefresh&quot;&gt;</span></div>
<div class="ln" style="top:185.60px">8</div>
<div class="cl" style="top:201.20px"><span class="p">      &lt;</span><span class="t">i</span><span class="p"> </span><span class="a">class</span><span class="p">=</span><span class="s">&quot;icon icon-loading&quot;</span><span class="p">&gt;&lt;/</span><span class="t">i</span><span class="p">&gt;</span></div>
<div class="ln" style="top:201.20px">9</div>
<div class="cl" style="top:216.80px"><span class="p">      &lt;</span><span class="t">span</span><span class="p">&gt;Working Auto Update&lt;/</span><span class="t">span</span><span class="p">&gt;</span></div>
<div class="ln" style="top:216.80px">10</div>
<div class="cl" style="top:232.40px"><span class="p">    &lt;/</span><span class="t">div</span><span class="p">&gt;</span></div>
<div class="ln" style="top:232.40px">11</div>
<div class="cl" style="top:248.00px"><span class="p">  &lt;/</span><span class="t">div</span><span class="p">&gt;</span></div>
<div class="ln" style="top:248.00px">12</div>
<div class="cl" style="top:263.60px"><span class="p">&lt;/</span><span class="t">template</span><span class="p">&gt;</span></div>
<div class="ln" style="top:263.60px">13</div>
<div class="cl" style="top:279.20px"></div>
<div class="ln" style="top:279.20px">14</div>
<div class="cl" style="top:294.80px"><span class="p">&lt;</span><span class="t">script</span><span class="p">&gt;</span></div>
<div class="ln" style="top:294.80px">15</div>
<div class="cl" style="top:310.40px"><span class="k">import</span><span class="p"> { useRegisterSW } </span><span class="k">from</span><span class="p"> </span><span class="s">&quot;virtual:pwa-register/vue&quot;</span><span class="p">;</span></div>
<div class="ln" style="top:310.40px">16</div>
<div class="cl" style="top:326.00px"><span class="k">import</span><span class="p"> { watch } </span><span class="k">from</span><span class="p"> </span><span class="s">&#x27;@vue/runtime-core&#x27;</span><span class="p">;</span></div>
<div class="ln" style="top:326.00px">17</div>
<div class="cl" style="top:341.60px"></div>
<div class="ln" style="top:341.60px">18</div>
<div class="cl" style="top:357.20px"><span class="k">const</span><span class="p"> { </span><span class="v">offlineReady</span><span class="p">, </span><span class="v">needRefresh</span><span class="p">, </span><span class="v">updateServiceWorker</span><span class="p"> } </span><span class="k">=</span><span class="p"> </span><span class="f">useRegisterSW</span><span class="p">();</span></div>
<div class="ln" style="top:357.20px">19</div>
<div class="cl" style="top:372.80px"></div>
<div class="ln" style="top:372.80px">20</div>
<div class="cl" style="top:388.40px"><span class="k">export</span><span class="p"> </span><span class="k">default</span><span class="p"> </span><span class="o">{</span></div>
<div class="ln" style="top:388.40px">21</div>
<div class="cl" style="top:404.00px"><span class="p">  name: </span><span class="s">&quot;ReloadPrompt&quot;</span><span class="p">,</span></div>
<div class="ln" style="top:404.00px">22</div>
<div class="cl" style="top:419.60px"><span class="p">  </span><span class="f">setup</span><span class="o">()</span><span class="p"> {</span></div>
<div class="ln" style="top:419.60px">23</div>
<div class="cl" style="top:435.20px"><span class="p">    </span><span class="k">const</span><span class="p"> </span><span class="v">watcherStop</span><span class="p"> </span><span class="k">=</span><span class="p"> </span><span class="f">watch</span><span class="p">([ offlineReady, needRefresh ], (</span><span class="o">now</span><span class="p">, </span><span class="o">prev</span><span class="p">) </span><span class="k">  </span><span class="p"> {</span></div>
<div class="ln" style="top:435.20px">24</div>
<div class="cl" style="top:450.80px"><span class="p">      </span><span class="k">const</span><span class="p"> [ </span><span class="v">offlineNow</span><span class="p">, </span><span class="v">refreshNow</span><span class="p"> ] </span><span class="k">=</span><span class="p"> now;</span></div>
<div class="ln" style="top:450.80px">25</div>
<div class="cl" style="top:466.40px"><span class="p">      </span><span class="k">const</span><span class="p"> [ </span><span class="v">offlinePrev</span><span class="p">, </span><span class="v">refreshPrev</span><span class="p"> ] </span><span class="k">=</span><span class="p"> prev;</span></div>
<div class="ln" style="top:466.40px">26</div>
<div class="cl" style="top:482.00px"></div>
<div class="ln" style="top:482.00px">27</div>
<div class="cl" style="top:497.60px"><span class="p">      </span><span class="k">if</span><span class="p"> (offlineNow </span><span class="k">   </span><span class="p"> </span><span class="v">true</span><span class="p"> </span><span class="k">&amp;&amp;</span><span class="p"> offlinePrev </span><span class="k">   </span><span class="p"> </span><span class="v">false</span><span class="p">) {</span></div>
<div class="ln" style="top:497.60px">28</div>
<svg style="left:699.06px;top:438.70px" width="13" height="7" viewBox="0 0 13 7"><path d="M1.2 2.3 H8.5 M1.2 4.7 H8.5" stroke="#f47067" stroke-width="1.1"/><path d="M7.4 0.9 L11.4 3.5 L7.4 6.1" fill="none" stroke="#f47067" stroke-width="1.1"/></svg>
<div style="left:381.82px;top:502.80px;width:17.16px;height:1.2px;background:#f47067"></div>
<div style="left:381.82px;top:505.00px;width:17.16px;height:1.2px;background:#f47067"></div>
<div style="left:528.70px;top:502.80px;width:17.16px;height:1.2px;background:#f47067"></div>
<div style="left:528.70px;top:505.00px;width:17.16px;height:1.2px;background:#f47067"></div>
<div id="cursor"></div>

<div id="scrollbar"></div>
<div id="slider"></div>
<svg class="mm" width="880" height="527" viewBox="0 0 880 527"><rect x="811.00" y="74.90" width="0.60" height="0.9" fill="#c9d1d9" opacity="0.42"/><rect x="811.60" y="74.90" width="4.80" height="0.9" fill="#7ee787" opacity="0.42"/><rect x="816.40" y="74.90" width="0.60" height="0.9" fill="#c9d1d9" opacity="0.42"/><rect x="812.20" y="76.12" width="0.60" height="0.9" fill="#c9d1d9" opacity="0.42"/><rect x="812.80" y="76.12" width="1.80" height="0.9" fill="#7ee787" opacity="0.42"/><rect x="815.20" y="76.12" width="2.40" height="0.9" fill="#79c0ff" opacity="0.42"/><rect x="817.60" y="76.12" width="8.40" height="0.9" fill="#c9d1d9" opacity="0.42"/><rect x="826.60" y="76.12" width="1.20" height="0.9" fill="#ff7b72" opacity="0.42"/><rect x="828.40" y="76.12" width="7.20" height="0.9" fill="#c9d1d9" opacity="0.42"/><rect x="836.20" y="76.12" width="3.00" height="0.9" fill="#79c0ff" opacity="0.42"/><rect x="839.20" y="76.12" width="0.60" height="0.9" fill="#c9d1d9" opacity="0.42"/><rect x="839.80" y="76.12" width="6.60" height="0.9" fill="#a5d6ff" opacity="0.42"/><rect x="847.00" y="76.12" width="2.40" height="0.9" fill="#79c0ff" opacity="0.42"/><rect x="849.40" y="76.12" width="0.60" height="0.9" fill="#c9d1d9" opacity="0.42"/><rect x="850.00" y="76.12" width="4.20" height="0.9" fill="#a5d6ff" opacity="0.42"/><rect x="854.20" y="76.12" width="0.60" height="0.9" fill="#c9d1d9" opacity="0.42"/><rect x="813.40" y="77.34" width="0.60" height="0.9" fill="#c9d1d9" opacity="0.42"/><rect x="814.00" y="77.34" width="1.80" height="0.9" fill="#7ee787" opacity="0.42"/><rect x="816.40" y="77.34" width="3.00" height="0.9" fill="#79c0ff" opacity="0.42"/><rect x="819.40" y="77.34" width="0.60" height="0.9" fill="#c9d1d9" opacity="0.42"/><rect x="820.00" y="77.34" width="12.00" height="0.9" fill="#a5d6ff" opacity="0.42"/><rect x="832.60" y="77.34" width="2.40" height="0.9" fill="#79c0ff" opacity="0.42"/><rect x="835.00" y="77.34" width="9.60" height="0.9" fill="#c9d1d9" opacity="0.42"/><rect x="814.60" y="78.56" width="0.60" height="0.9" fill="#c9d1d9" opacity="0.42"/><rect x="815.20" y="78.56" width="0.60" height="0.9" fill="#7ee787" opacity="0.42"/><rect x="816.40" y="78.56" width="3.00" height="0.9" fill="#79c0ff" opacity="0.42"/><rect x="819.40" y="78.56" width="0.60" height="0.9" fill="#c9d1d9" opacity="0.42"/><rect x="820.00" y="78.56" width="3.00" height="0.9" fill="#a5d6ff" opacity="0.42"/><rect x="823.60" y="78.56" width="13.20" height="0.9" fill="#a5d6ff" opacity="0.42"/><rect x="836.80" y="78.56" width="1.80" height="0.9" fill="#c9d1d9" opacity="0.42"/><rect x="838.60" y="78.56" width="0.60" height="0.9" fill="#7ee787" opacity="0.42"/><rect x="839.20" y="78.56" width="0.60" height="0.9" fill="#c9d1d9" opacity="0.42"/><rect x="814.60" y="79.78" width="0.60" height="0.9" fill="#c9d1d9" opacity="0.42"/><rect x="815.20" y="79.78" width="2.40" height="0.9" fill="#7ee787" opacity="0.42"/><rect x="817.60" y="79.78" width="4.80" height="0.9" fill="#c9d1d9" opacity="0.42"/><rect x="823.00" y="79.78" width="2.40" height="0.9" fill="#c9d1d9" opacity="0.42"/><rect x="826.00" y="79.78" width="4.20" height="0.9" fill="#c9d1d9" opacity="0.42"/><rect x="830.20" y="79.78" width="2.40" height="0.9" fill="#7ee787" opacity="0.42"/><rect x="832.60" y="79.78" width="0.60" height="0.9" fill="#c9d1d9" opacity="0.42"/><rect x="813.40" y="81.00" width="1.20" height="0.9" fill="#c9d1d9" opacity="0.42"/><rect x="814.60" y="81.00" width="1.80" height="0.9" fill="#7ee787" opacity="0.42"/><rect x="816.40" y="81.00" width="0.60" height="0.9" fill="#c9d1d9" opacity="0.42"/><rect x="813.40" y="83.44" width="0.60" height="0.9" fill="#c9d1d9" opacity="0.42"/><rect x="814.00" y="83.44" width="1.80" height="0.9" fill="#7ee787" opacity="0.42"/><rect x="816.40" y="83.44" width="3.00" height="0.9" fill="#79c0ff" opacity="0.42"/><rect x="819.40" y="83.44" width="0.60" height="0.9" fill="#c9d1d9" opacity="0.42"/><rect x="820.00" y="83.44" width="11.40" height="0.9" fill="#a5d6ff" opacity="0.42"/><rect x="832.00" y="83.44" width="2.40" height="0.9" fill="#79c0ff" opacity="0.42"/><rect x="834.40" y="83.44" width="9.00" height="0.9" fill="#c9d1d9" opacity="0.42"/><rect x="814.60" y="84.66" width="0.60" height="0.9" fill="#c9d1d9" opacity="0.42"/><rect x="815.20" y="84.66" width="0.60" height="0.9" fill="#7ee787" opacity="0.42"/><rect x="816.40" y="84.66" width="3.00" height="0.9" fill="#79c0ff" opacity="0.42"/><rect x="819.40" y="84.66" width="0.60" height="0.9" fill="#c9d1d9" opacity="0.42"/><rect x="820.00" y="84.66" width="3.00" height="0.9" fill="#a5d6ff" opacity="0.42"/><rect x="823.60" y="84.66" width="7.80" height="0.9" fill="#a5d6ff" opacity="0.42"/><rect x="831.40" y="84.66" width="1.80" height="0.9" fill="#c9d1d9" opacity="0.42"/><rect x="833.20" y="84.66" width="0.60" height="0.9" fill="#7ee787" opacity="0.42"/><rect x="833.80" y="84.66" width="0.60" height="0.9" fill="#c9d1d9" opacity="0.42"/><rect x="814.60" y="85.88" width="0.60" height="0.9" fill="#c9d1d9" opacity="0.42"/><rect x="815.20" y="85.88" width="2.40" height="0.9" fill="#7ee787" opacity="0.42"/><rect x="817.60" y="85.88" width="4.80" height="0.9" fill="#c9d1d9" opacity="0.42"/><rect x="823.00" y="85.88" width="2.40" height="0.9" fill="#c9d1d9" opacity="0.42"/><rect x="826.00" y="85.88" width="4.80" height="0.9" fill="#c9d1d9" opacity="0.42"/><rect x="830.80" y="85.88" width="2.40" height="0.9" fill="#7ee787" opacity="0.42"/><rect x="833.20" y="85.88" width="0.60" height="0.9" fill="#c9d1d9" opacity="0.42"/><rect x="813.40" y="87.10" width="1.20" height="0.9" fill="#c9d1d9" opacity="0.42"/><rect x="814.60" y="87.10" width="1.80" height="0.9" fill="#7ee787" opacity="0.42"/><rect x="816.40" y="87.10" width="0.60" height="0.9" fill="#c9d1d9" opacity="0.42"/><rect x="812.20" y="88.32" width="1.20" height="0.9" fill="#c9d1d9" opacity="0.42"/><rect x="813.40" y="88.32" width="1.80" height="0.9" fill="#7ee787" opacity="0.42"/><rect x="815.20" y="88.32" width="0.60" height="0.9" fill="#c9d1d9" opacity="0.42"/><rect x="811.00" y="89.54" width="1.20" height="0.9" fill="#c9d1d9" opacity="0.42"/><rect x="812.20" y="89.54" width="4.80" height="0.9" fill="#7ee787" opacity="0.42"/><rect x="817.00" y="89.54" width="0.60" height="0.9" fill="#c9d1d9" opacity="0.42"/><rect x="811.00" y="91.98" width="0.60" height="0.9" fill="#c9d1d9" opacity="0.42"/><rect x="811.60" y="91.98" width="3.60" height="0.9" fill="#7ee787" opacity="0.42"/><rect x="815.20" y="91.98" width="0.60" height="0.9" fill="#c9d1d9" opacity="0.42"/><rect x="811.00" y="93.20" width="3.60" height="0.9" fill="#ff7b72" opacity="0.42"/><rect x="815.20" y="93.20" width="0.60" height="0.9" fill="#c9d1d9" opacity="0.42"/><rect x="816.40" y="93.20" width="7.80" height="0.9" fill="#c9d1d9" opacity="0.42"/><rect x="824.80" y="93.20" width="0.60" height="0.9" fill="#c9d1d9" opacity="0.42"/><rect x="826.00" y="93.20" width="2.40" height="0.9" fill="#ff7b72" opacity="0.42"/><rect x="829.00" y="93.20" width="15.60" height="0.9" fill="#a5d6ff" opacity="0.42"/><rect x="844.60" y="93.20" width="0.60" height="0.9" fill="#c9d1d9" opacity="0.42"/><rect x="811.00" y="94.42" width="3.60" height="0.9" fill="#ff7b72" opacity="0.42"/><rect x="815.20" y="94.42" width="0.60" height="0.9" fill="#c9d1d9" opacity="0.42"/><rect x="816.40" y="94.42" width="3.00" height="0.9" fill="#c9d1d9" opacity="0.42"/><rect x="820.00" y="94.42" width="0.60" height="0.9" fill="#c9d1d9" opacity="0.42"/><rect x="821.20" y="94.42" width="2.40" height="0.9" fill="#ff7b72" opacity="0.42"/><rect x="824.20" y="94.42" width="11.40" height="0.9" fill="#a5d6ff" opacity="0.42"/><rect x="835.60" y="94.42" width="0.60" height="0.9" fill="#c9d1d9" opacity="0.42"/><rect x="811.00" y="96.86" width="3.00" height="0.9" fill="#ff7b72" opacity="0.42"/><rect x="814.60" y="96.86" width="0.60" height="0.9" fill="#c9d1d9" opacity="0.42"/><rect x="815.80" y="96.86" width="7.20" height="0.9" fill="#79c0ff" opacity="0.42"/><rect x="823.00" y="96.86" width="0.60" height="0.9" fill="#c9d1d9" opacity="0.42"/><rect x="824.20" y="96.86" width="6.60" height="0.9" fill="#79c0ff" opacity="0.42"/><rect x="830.80" y="96.86" width="0.60" height="0.9" fill="#c9d1d9" opacity="0.42"/><rect x="832.00" y="96.86" width="11.40" height="0.9" fill="#79c0ff" opacity="0.42"/><rect x="844.00" y="96.86" width="0.60" height="0.9" fill="#c9d1d9" opacity="0.42"/><rect x="845.20" y="96.86" width="0.60" height="0.9" fill="#ff7b72" opacity="0.42"/><rect x="846.40" y="96.86" width="7.80" height="0.9" fill="#d2a8ff" opacity="0.42"/><rect x="854.20" y="96.86" width="1.80" height="0.9" fill="#c9d1d9" opacity="0.42"/><rect x="811.00" y="99.30" width="3.60" height="0.9" fill="#ff7b72" opacity="0.42"/><rect x="815.20" y="99.30" width="4.20" height="0.9" fill="#ff7b72" opacity="0.42"/><rect x="820.00" y="99.30" width="0.60" height="0.9" fill="#ffa657" opacity="0.42"/><rect x="812.20" y="100.52" width="3.00" height="0.9" fill="#c9d1d9" opacity="0.42"/><rect x="815.80" y="100.52" width="8.40" height="0.9" fill="#a5d6ff" opacity="0.42"/><rect x="824.20" y="100.52" width="0.60" height="0.9" fill="#c9d1d9" opacity="0.42"/><rect x="812.20" y="101.74" width="3.00" height="0.9" fill="#d2a8ff" opacity="0.42"/><rect x="815.20" y="101.74" width="1.20" height="0.9" fill="#ffa657" opacity="0.42"/><rect x="817.00" y="101.74" width="0.60" height="0.9" fill="#c9d1d9" opacity="0.42"/><rect x="813.40" y="102.96" width="3.00" height="0.9" fill="#ff7b72" opacity="0.42"/><rect x="817.00" y="102.96" width="6.60" height="0.9" fill="#79c0ff" opacity="0.42"/><rect x="824.20" y="102.96" width="0.60" height="0.9" fill="#ff7b72" opacity="0.42"/><rect x="825.40" y="102.96" width="3.00" height="0.9" fill="#d2a8ff" opacity="0.42"/><rect x="828.40" y="102.96" width="1.20" height="0.9" fill="#c9d1d9" opacity="0.42"/><rect x="830.20" y="102.96" width="7.80" height="0.9" fill="#c9d1d9" opacity="0.42"/><rect x="838.60" y="102.96" width="6.60" height="0.9" fill="#c9d1d9" opacity="0.42"/><rect x="845.80" y="102.96" width="1.20" height="0.9" fill="#c9d1d9" opacity="0.42"/><rect x="847.60" y="102.96" width="0.60" height="0.9" fill="#c9d1d9" opacity="0.42"/><rect x="848.20" y="102.96" width="1.80" height="0.9" fill="#ffa657" opacity="0.42"/><rect x="850.00" y="102.96" width="0.60" height="0.9" fill="#c9d1d9" opacity="0.42"/><rect x="851.20" y="102.96" width="2.40" height="0.9" fill="#ffa657" opacity="0.42"/><rect x="853.60" y="102.96" width="0.60" height="0.9" fill="#c9d1d9" opacity="0.42"/><rect x="856.60" y="102.96" width="0.60" height="0.9" fill="#c9d1d9" opacity="0.42"/><rect x="814.60" y="104.18" width="3.00" height="0.9" fill="#ff7b72" opacity="0.42"/><rect x="818.20" y="104.18" width="0.60" height="0.9" fill="#c9d1d9" opacity="0.42"/><rect x="819.40" y="104.18" width="6.00" height="0.9" fill="#79c0ff" opacity="0.42"/><rect x="825.40" y="104.18" width="0.60" height="0.9" fill="#c9d1d9" opacity="0.42"/><rect x="826.60" y="104.18" width="6.00" height="0.9" fill="#79c0ff" opacity="0.42"/><rect x="833.20" y="104.18" width="0.60" height="0.9" fill="#c9d1d9" opacity="0.42"/><rect x="834.40" y="104.18" width="0.60" height="0.9" fill="#ff7b72" opacity="0.42"/><rect x="835.60" y="104.18" width="2.40" height="0.9" fill="#c9d1d9" opacity="0.42"/><rect x="814.60" y="105.40" width="3.00" height="0.9" fill="#ff7b72" opacity="0.42"/><rect x="818.20" y="105.40" width="0.60" height="0.9" fill="#c9d1d9" opacity="0.42"/><rect x="819.40" y="105.40" width="6.60" height="0.9" fill="#79c0ff" opacity="0.42"/><rect x="826.00" y="105.40" width="0.60" height="0.9" fill="#c9d1d9" opacity="0.42"/><rect x="827.20" y="105.40" width="6.60" height="0.9" fill="#79c0ff" opacity="0.42"/><rect x="834.40" y="105.40" width="0.60" height="0.9" fill="#c9d1d9" opacity="0.42"/><rect x="835.60" y="105.40" width="0.60" height="0.9" fill="#ff7b72" opacity="0.42"/><rect x="836.80" y="105.40" width="3.00" height="0.9" fill="#c9d1d9" opacity="0.42"/><rect x="814.60" y="107.84" width="1.20" height="0.9" fill="#ff7b72" opacity="0.42"/><rect x="816.40" y="107.84" width="6.60" height="0.9" fill="#c9d1d9" opacity="0.42"/><rect x="826.00" y="107.84" width="2.40" height="0.9" fill="#79c0ff" opacity="0.42"/><rect x="829.00" y="107.84" width="1.20" height="0.9" fill="#ff7b72" opacity="0.42"/><rect x="830.80" y="107.84" width="6.60" height="0.9" fill="#c9d1d9" opacity="0.42"/><rect x="840.40" y="107.84" width="3.00" height="0.9" fill="#79c0ff" opacity="0.42"/><rect x="843.40" y="107.84" width="0.60" height="0.9" fill="#c9d1d9" opacity="0.42"/><rect x="844.60" y="107.84" width="0.60" height="0.9" fill="#c9d1d9" opacity="0.42"/><rect x="815.80" y="109.06" width="7.20" height="0.9" fill="#79c0ff" opacity="0.42"/><rect x="823.00" y="109.06" width="3.60" height="0.9" fill="#c9d1d9" opacity="0.42"/><rect x="827.20" y="109.06" width="0.60" height="0.9" fill="#ff7b72" opacity="0.42"/><rect x="828.40" y="109.06" width="2.40" height="0.9" fill="#79c0ff" opacity="0.42"/><rect x="830.80" y="109.06" width="0.60" height="0.9" fill="#c9d1d9" opacity="0.42"/><rect x="815.80" y="110.28" width="7.20" height="0.9" fill="#79c0ff" opacity="0.42"/><rect x="823.00" y="110.28" width="3.60" height="0.9" fill="#c9d1d9" opacity="0.42"/><rect x="827.20" y="110.28" width="0.60" height="0.9" fill="#ff7b72" opacity="0.42"/><rect x="828.40" y="110.28" width="3.00" height="0.9" fill="#79c0ff" opacity="0.42"/><rect x="831.40" y="110.28" width="0.60" height="0.9" fill="#c9d1d9" opacity="0.42"/><rect x="815.80" y="111.50" width="6.00" height="0.9" fill="#d2a8ff" opacity="0.42"/><rect x="821.80" y="111.50" width="4.80" height="0.9" fill="#c9d1d9" opacity="0.42"/><rect x="814.60" y="112.72" width="0.60" height="0.9" fill="#c9d1d9" opacity="0.42"/><rect x="814.60" y="113.94" width="1.20" height="0.9" fill="#ff7b72" opacity="0.42"/><rect x="816.40" y="113.94" width="6.60" height="0.9" fill="#c9d1d9" opacity="0.42"/><rect x="823.60" y="113.94" width="1.80" height="0.9" fill="#ff7b72" opacity="0.42"/><rect x="826.00" y="113.94" width="2.40" height="0.9" fill="#79c0ff" opacity="0.42"/><rect x="829.00" y="113.94" width="1.20" height="0.9" fill="#ff7b72" opacity="0.42"/><rect x="830.80" y="113.94" width="6.60" height="0.9" fill="#c9d1d9" opacity="0.42"/><rect x="838.00" y="113.94" width="1.80" height="0.9" fill="#ff7b72" opacity="0.42"/><rect x="840.40" y="113.94" width="3.00" height="0.9" fill="#79c0ff" opacity="0.42"/><rect x="843.40" y="113.94" width="0.60" height="0.9" fill="#c9d1d9" opacity="0.42"/><rect x="844.60" y="113.94" width="0.60" height="0.9" fill="#c9d1d9" opacity="0.42"/><rect x="815.80" y="115.16" width="6.60" height="0.9" fill="#79c0ff" opacity="0.42"/><rect x="822.40" y="115.16" width="3.60" height="0.9" fill="#c9d1d9" opacity="0.42"/><rect x="826.60" y="115.16" width="0.60" height="0.9" fill="#ff7b72" opacity="0.42"/><rect x="827.80" y="115.16" width="2.40" height="0.9" fill="#79c0ff" opacity="0.42"/><rect x="830.20" y="115.16" width="0.60" height="0.9" fill="#c9d1d9" opacity="0.42"/><rect x="815.80" y="116.38" width="11.40" height="0.9" fill="#d2a8ff" opacity="0.42"/><rect x="827.20" y="116.38" width="4.20" height="0.9" fill="#c9d1d9" opacity="0.42"/><rect x="815.80" y="117.60" width="3.00" height="0.9" fill="#79c0ff" opacity="0.42"/><rect x="818.80" y="117.60" width="1.80" height="0.9" fill="#c9d1d9" opacity="0.42"/><rect x="814.60" y="118.82" width="0.60" height="0.9" fill="#c9d1d9" opacity="0.42"/><rect x="813.40" y="120.04" width="1.80" height="0.9" fill="#c9d1d9" opacity="0.42"/><rect x="813.40" y="122.48" width="3.60" height="0.9" fill="#ff7b72" opacity="0.42"/><rect x="817.60" y="122.48" width="0.60" height="0.9" fill="#c9d1d9" opacity="0.42"/><rect x="814.60" y="123.70" width="7.20" height="0.9" fill="#c9d1d9" opacity="0.42"/><rect x="813.40" y="124.92" width="1.20" height="0.9" fill="#c9d1d9" opacity="0.42"/><rect x="812.20" y="126.14" width="1.20" height="0.9" fill="#c9d1d9" opacity="0.42"/><rect x="811.00" y="127.36" width="1.20" height="0.9" fill="#c9d1d9" opacity="0.42"/><rect x="811.00" y="131.02" width="1.20" height="0.9" fill="#c9d1d9" opacity="0.42"/><rect x="812.20" y="131.02" width="3.60" height="0.9" fill="#7ee787" opacity="0.42"/><rect x="815.80" y="131.02" width="0.60" height="0.9" fill="#c9d1d9" opacity="0.42"/><rect x="811.00" y="133.46" width="0.60" height="0.9" fill="#c9d1d9" opacity="0.42"/><rect x="811.60" y="133.46" width="3.00" height="0.9" fill="#7ee787" opacity="0.42"/><rect x="815.20" y="133.46" width="2.40" height="0.9" fill="#79c0ff" opacity="0.42"/><rect x="817.60" y="133.46" width="0.60" height="0.9" fill="#c9d1d9" opacity="0.42"/><rect x="818.20" y="133.46" width="3.60" height="0.9" fill="#a5d6ff" opacity="0.42"/><rect x="821.80" y="133.46" width="0.60" height="0.9" fill="#c9d1d9" opacity="0.42"/></svg>
<div style="left:811px;top:80px;width:55px;height:1px;background:#1d4168"></div>
<div style="left:866px;top:96.8px;width:8.5px;height:1.4px;background:#5a9de0"></div>

<div id="status"></div>
<svg style="left:211.5px;top:511px" width="7" height="9" viewBox="0 0 7 9" fill="none" stroke="#9da5ad" stroke-width="0.8"><circle cx="1.6" cy="1.5" r="1"/><circle cx="1.6" cy="7.5" r="1"/><circle cx="5.4" cy="3" r="1"/><path d="M1.6 2.5 V6.5 M5.4 4 Q5.4 5.5 1.6 6.4"/></svg>
<div class="st" style="left:224.2px">main</div>
<svg style="left:251.5px;top:510.5px" width="9" height="9" viewBox="0 0 9 9" fill="none" stroke="#9da5ad" stroke-width="0.8"><path d="M1.3 4.5 A3.2 3.2 0 0 1 7.2 2.8 M7.7 4.5 A3.2 3.2 0 0 1 1.8 6.2"/><path d="M7.4 1.2 V3 H5.6 M1.6 7.8 V6 H3.4"/></svg>
<svg style="left:269.5px;top:510.5px" width="9" height="9" viewBox="0 0 9 9" fill="none" stroke="#9da5ad" stroke-width="0.8"><circle cx="4.5" cy="4.5" r="3.8"/><path d="M3 3 L6 6 M6 3 L3 6"/></svg>
<div class="st" style="left:282.4px">0</div>
<svg style="left:291.5px;top:510.5px" width="9" height="9" viewBox="0 0 9 9" fill="none" stroke="#9da5ad" stroke-width="0.8"><path d="M4.5 0.8 L8.3 8 H0.7Z M4.5 3.4 V5.6 M4.5 6.4 V7"/></svg>
<div class="st" style="left:304.4px">0</div>
<div class="st" style="left:317.8px">Git Graph</div>
<svg style="left:367.5px;top:510.5px" width="9" height="9" viewBox="0 0 9 9" fill="none" stroke="#9da5ad" stroke-width="0.8"><path d="M1.3 4.5 A3.2 3.2 0 0 1 7.2 2.8 M7.7 4.5 A3.2 3.2 0 0 1 1.8 6.2"/><path d="M7.4 1.2 V3 H5.6 M1.6 7.8 V6 H3.4"/></svg>
<div class="st" style="left:381px">Load project: /media/ryanaunur/Project/playground/share</div>
<svg style="left:633.5px;top:510.5px" width="9" height="9" viewBox="0 0 9 9" fill="none" stroke="#9da5ad" stroke-width="0.8"><path d="M1.5 4.5 A3.2 3.2 0 1 0 2.4 2.2 M1.2 1.2 V3 H3"/><path d="M4.6 2.8 V4.7 L6 5.8"/></svg>
<div class="st" style="left:646.5px">2 hrs 24 mins</div>
<svg style="left:713.5px;top:510.5px" width="8" height="9" viewBox="0 0 8 9" fill="none" stroke="#9da5ad" stroke-width="0.8"><circle cx="4" cy="4.5" r="3.3"/><path d="M3.2 3 L5.4 4.5 L3.2 6Z" fill="#9da5ad"/></svg>
<div class="st" style="left:724.8px">tabnine</div>
<svg style="left:779px;top:511px" width="10" height="8" viewBox="0 0 10 8" fill="none" stroke="#9da5ad" stroke-width="0.8"><path d="M0.6 4.5 L2.4 6.5 L6.5 1.2 M4.3 6.5 L9.2 1.2"/></svg>
<div class="st" style="left:793.5px">Prettier</div>
<svg style="left:838.5px;top:510.5px" width="9" height="9" viewBox="0 0 9 9" fill="none" stroke="#9da5ad" stroke-width="0.8"><path d="M3 1 H8.4 V5 H5.6 M0.8 8.6 L3 5.2 L5.2 8.6 M1.6 3.6 A1.5 1.5 0 1 0 4.4 3.6 A1.5 1.5 0 1 0 1.6 3.6"/></svg>
<svg style="left:857.5px;top:510px" width="9" height="10" viewBox="0 0 9 10" fill="none" stroke="#9da5ad" stroke-width="0.8"><path d="M4.5 8.8 Q3.6 8.8 3.6 8 M1 7.8 H8 L7 6.5 V4 Q7 1.6 4.5 1.6 Q2 1.6 2 4 V6.5Z"/><circle cx="7" cy="2.2" r="1.5" fill="#a8c8f0" stroke="none"/></svg>
<div id="sbborder"></div>
<div style="left:3px;top:520px;width:872px;height:1px;background:#1b1e23"></div>
</body></html>
